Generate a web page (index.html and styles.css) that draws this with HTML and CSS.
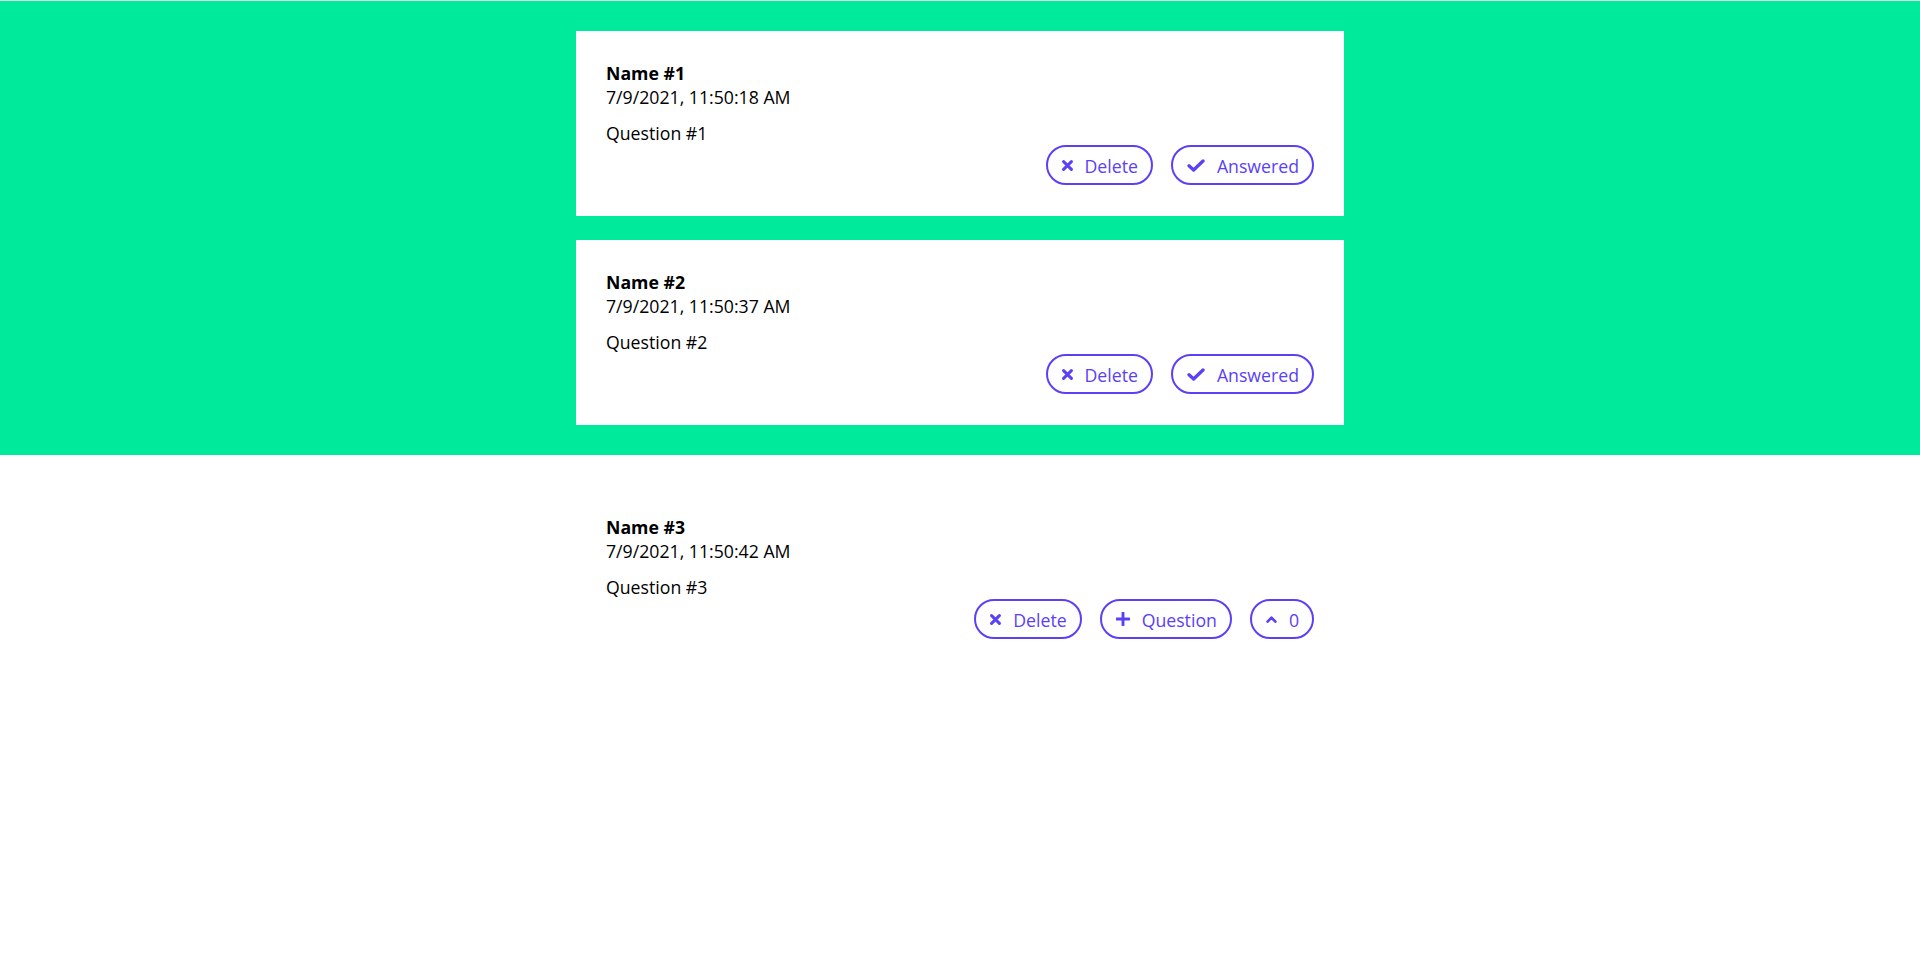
FILE: index.html
```html
<!DOCTYPE html>
<html lang="en">
<head>
<meta charset="utf-8">
<title>Questions</title>
<link rel="stylesheet" href="styles.css">
</head>
<body>
<div class="page">
  <section class="answered">
    <div class="list">
      <article class="card">
        <div class="name">Name #1</div>
        <div class="date">7/9/2021, 11:50:18 AM</div>
        <p class="question">Question #1</p>
        <div class="actions">
          <button class="btn"><svg class="ico ico-x" viewBox="0 0 11 11"><path d="M1.6 1.6L9.4 9.4M9.4 1.6L1.6 9.4"/></svg><span>Delete</span></button>
          <button class="btn"><svg class="ico ico-check" viewBox="0 0 18 13"><path d="M2 6.8L6.6 11L16 2"/></svg><span>Answered</span></button>
        </div>
      </article>
      <article class="card">
        <div class="name">Name #2</div>
        <div class="date">7/9/2021, 11:50:37 AM</div>
        <p class="question">Question #2</p>
        <div class="actions">
          <button class="btn"><svg class="ico ico-x" viewBox="0 0 11 11"><path d="M1.6 1.6L9.4 9.4M9.4 1.6L1.6 9.4"/></svg><span>Delete</span></button>
          <button class="btn"><svg class="ico ico-check" viewBox="0 0 18 13"><path d="M2 6.8L6.6 11L16 2"/></svg><span>Answered</span></button>
        </div>
      </article>
    </div>
  </section>
  <section class="open">
    <div class="list">
      <article class="card">
        <div class="name">Name #3</div>
        <div class="date">7/9/2021, 11:50:42 AM</div>
        <p class="question">Question #3</p>
        <div class="actions">
          <button class="btn"><svg class="ico ico-x" viewBox="0 0 11 11"><path d="M1.6 1.6L9.4 9.4M9.4 1.6L1.6 9.4"/></svg><span>Delete</span></button>
          <button class="btn"><svg class="ico ico-plus" viewBox="0 0 14 14"><path d="M7 1V13M1 7H13"/></svg><span>Question</span></button>
          <button class="btn"><svg class="ico ico-up" viewBox="0 0 11 7"><path d="M1.6 5.6L5.5 1.7L9.4 5.6"/></svg><span>0</span></button>
        </div>
      </article>
    </div>
  </section>
</div>
</body>
</html>
```
FILE: styles.css
```css
* { box-sizing: border-box; }

html, body {
  margin: 0;
  padding: 0;
  background: #ffffff;
}

body {
  font-family: "Open Sans", "Noto Sans", sans-serif;
  font-size: 17.7px;
  line-height: 24px;
  color: #000000;
  border-top: 1px solid #e2e2e2;
}

.answered {
  background: #00ea9b;
  padding: 30px 0;
}

.open {
  padding: 30px 0;
}

.list {
  width: 768px;
  margin: 0 auto;
  display: flex;
  flex-direction: column;
  gap: 24px;
}

.card {
  background: #ffffff;
  padding: 30px 30px 31px;
}

.name {
  font-weight: 700;
}

.question {
  margin: 12px 0 0;
}

.actions {
  display: flex;
  justify-content: flex-end;
  gap: 18px;
}

.btn {
  display: inline-flex;
  align-items: center;
  gap: 12px;
  height: 40px;
  padding: 2px 13px 0 14px;
  border: 2px solid #5a41f5;
  border-radius: 20px;
  background: #ffffff;
  color: #5a41f5;
  font-family: inherit;
  font-size: 17.7px;
  line-height: 24px;
  cursor: pointer;
}

.ico {
  display: block;
  flex: none;
  fill: none;
  stroke: #5a41f5;
  margin-top: -2px;
}

.ico-x { width: 11px; height: 11px; stroke-width: 3; stroke-linecap: round; }
.ico-check { width: 18px; height: 13px; stroke-width: 3.3; stroke-linecap: round; stroke-linejoin: round; }
.ico-plus { width: 14px; height: 14px; stroke-width: 2.9; stroke-linecap: round; }
.ico-up { width: 11px; height: 7px; stroke-width: 2.7; stroke-linecap: round; stroke-linejoin: round; }
```
